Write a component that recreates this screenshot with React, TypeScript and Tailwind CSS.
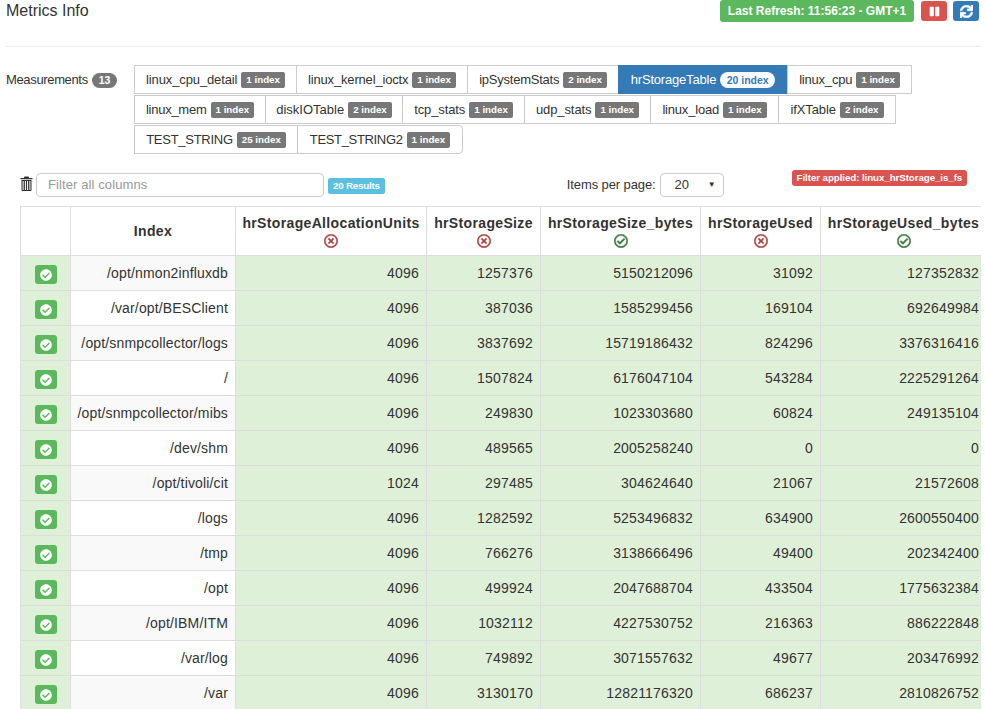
import { FaCheckCircle, FaPause, FaRegCheckCircle, FaRegTimesCircle, FaSync } from "react-icons/fa";

type P = { n: string; c: string; w: string; t: string };

const row1: P[] = [
  { n: "linux_cpu_detail", c: "1 index", w: "w-[163px]", t: "tracking-[-0.12px]" },
  { n: "linux_kernel_ioctx", c: "1 index", w: "w-[172px]", t: "tracking-[-0.17px]" },
  { n: "ipSystemStats", c: "2 index", w: "w-[152px]", t: "tracking-[-0.23px]" },
  { n: "hrStorageTable", c: "20 index", w: "w-[170px]", t: "tracking-[-0.2px]" },
  { n: "linux_cpu", c: "1 index", w: "w-[125px]", t: "tracking-[-0.2px]" },
];
const row2: P[] = [
  { n: "linux_mem", c: "1 index", w: "w-[132px]", t: "tracking-[-0.25px]" },
  { n: "diskIOTable", c: "2 index", w: "w-[138px]", t: "tracking-normal" },
  { n: "tcp_stats", c: "1 index", w: "w-[123px]", t: "tracking-[-0.1px]" },
  { n: "udp_stats", c: "1 index", w: "w-[127px]", t: "tracking-[-0.1px]" },
  { n: "linux_load", c: "1 index", w: "w-[129px]", t: "tracking-[-0.2px]" },
  { n: "ifXTable", c: "2 index", w: "w-[118px]", t: "tracking-[-0.1px]" },
];
const row3: P[] = [
  { n: "TEST_STRING", c: "25 index", w: "w-[164px]", t: "tracking-[-0.27px]" },
  { n: "TEST_STRING2", c: "1 index", w: "w-[166px]", t: "tracking-[-0.33px]" },
];

const cols: [string, boolean, string][] = [
  ["hrStorageAllocationUnits", false, "w-[191px]"],
  ["hrStorageSize", false, "w-[114px]"],
  ["hrStorageSize_bytes", true, "w-[160px]"],
  ["hrStorageUsed", false, "w-[120px]"],
  ["hrStorageUsed_bytes", true, "w-[166px]"],
];

const rows: (string | number)[][] = [
  ["/opt/nmon2influxdb", 4096, 1257376, 5150212096, 31092, 127352832],
  ["/var/opt/BESClient", 4096, 387036, 1585299456, 169104, 692649984],
  ["/opt/snmpcollector/logs", 4096, 3837692, 15719186432, 824296, 3376316416],
  ["/", 4096, 1507824, 6176047104, 543284, 2225291264],
  ["/opt/snmpcollector/mibs", 4096, 249830, 1023303680, 60824, 249135104],
  ["/dev/shm", 4096, 489565, 2005258240, 0, 0],
  ["/opt/tivoli/cit", 1024, 297485, 304624640, 21067, 21572608],
  ["/logs", 4096, 1282592, 5253496832, 634900, 2600550400],
  ["/tmp", 4096, 766276, 3138666496, 49400, 202342400],
  ["/opt", 4096, 499924, 2047688704, 433504, 1775632384],
  ["/opt/IBM/ITM", 4096, 1032112, 4227530752, 216363, 886222848],
  ["/var/log", 4096, 749892, 3071557632, 49677, 203476992],
  ["/var", 4096, 3130170, 12821176320, 686237, 2810826752],
];

function Pill({ p, last }: { p: P; last?: boolean }) {
  const active = p.n === "hrStorageTable";
  return (
    <div className={`-ml-px flex h-[29px] items-center justify-center gap-[4px] border ${p.w} ${active ? "border-[#337ab7] bg-[#337ab7] text-white" : "border-[#ccc] bg-white text-[#333]"} ${last ? "rounded-r-[4px]" : ""}`}>
      <span className={p.t}>{p.n}</span>
      {active ? (
        <span className="rounded-[10px] bg-white px-[6.5px] py-[1px] text-[10.5px] leading-[14px] font-bold text-[#337ab7]">{p.c}</span>
      ) : (
        <span className="rounded-[2px] bg-[#777] px-[5px] pt-[2px] pb-[3px] text-[9.75px] leading-[11px] font-bold text-white">{p.c}</span>
      )}
    </div>
  );
}

function Trash() {
  return (
    <svg width="13" height="15" viewBox="0 0 13 15" className="mt-[3px] shrink-0" fill="#333">
      <path d="M4.5 0.5h4l0.7 1.5H12.5v1.2H0.5V2h3.3z" />
      <path d="M1.5 4h10v10.2a0.8 0.8 0 0 1-0.8 0.8H2.3a0.8 0.8 0 0 1-0.8-0.8zM2.6 5v9h1V5zM4.9 5v9h1V5zM7.1 5v9h1V5zM9.4 5v9h1V5z" fillRule="evenodd" />
    </svg>
  );
}

export default function App() {
  return (
    <div className="h-[709px] w-[985px] overflow-hidden bg-white text-[13px] text-[#333]" style={{ fontFamily: '"Liberation Sans", Arial, sans-serif' }}>
      <div className="mr-[4px] ml-[6px] flex h-[47px] items-start justify-between border-b border-[#eee] pr-[2px]">
        <h1 className="mt-[2px] text-[16px] leading-[18px] text-[#333]">Metrics Info</h1>
        <div className="flex items-start">
          <span className="flex h-[22px] w-[194px] items-center justify-center rounded-[3px] bg-[#5cb85c] text-[12px] font-bold text-white">Last Refresh: 11:56:23 - GMT+1</span>
          <span className="mt-[1px] ml-[7px] flex h-[20px] w-[26px] items-center justify-center rounded-[3px] bg-[#d9534f] text-white"><FaPause size={11} /></span>
          <span className="mt-[1px] ml-[6px] flex h-[20px] w-[26px] items-center justify-center rounded-[3px] bg-[#337ab7] text-white"><FaSync size={13} stroke="currentColor" strokeWidth={24} /></span>
        </div>
      </div>

      <div className="mt-[18px] ml-[6px] flex">
        <div className="flex w-[129px] items-start pt-[7px]">
          <span className="text-[13px] leading-[16px] tracking-[-0.35px]">Measurements</span>
          <span className="mt-[1px] ml-[4px] rounded-[10px] bg-[#777] px-[7px] py-[1px] text-[10.5px] leading-[13px] font-bold text-white">13</span>
        </div>
        <div className="flex flex-col gap-[1px] text-[13px]">
          <div className="flex">{row1.map((p) => <Pill key={p.n} p={p} />)}</div>
          <div className="flex">{row2.map((p) => <Pill key={p.n} p={p} />)}</div>
          <div className="flex">{row3.map((p, i) => <Pill key={p.n} p={p} last={i === 1} />)}</div>
        </div>
      </div>

      <div className="mt-[19px] ml-[20px] flex h-[33px] items-start">
        <Trash />
        <div className="ml-[3px] flex h-[24px] w-[288px] items-center rounded-[4px] border border-[#ccc] px-[11px] text-[13px] tracking-[0.1px] text-[#999]">Filter all columns</div>
        <span className="mt-[5px] ml-[4px] rounded-[2px] bg-[#5bc0de] px-[5px] pt-[2px] pb-[3px] text-[9.75px] leading-[11px] font-bold tracking-[-0.2px] text-white">20 Results</span>
        <span className="mt-[4px] ml-[182px] text-[13px] leading-[16px] tracking-[-0.1px]">Items per page:</span>
        <div className="ml-[4px] flex h-[24px] w-[64px] items-center justify-between rounded-[4px] border border-[#ccc] pr-[7px] pl-[14px] text-[13px]">
          <span>20</span>
          <span className="text-[8px]">▼</span>
        </div>
        <span className="mt-[-3px] ml-[68px] rounded-[3px] bg-[#d9534f] px-[5px] pt-[2px] pb-[3px] text-[9.75px] leading-[11px] font-bold tracking-[-0.08px] text-white">Filter applied: linux_hrStorage_is_fs</span>
      </div>

      <div className="ml-[20px] w-[961px] overflow-hidden">
        <table className="w-[966px] table-fixed border-collapse text-[14px]">
          <thead>
            <tr className="h-[49px]">
              <th className="w-[50px] border border-[#ddd]"></th>
              <th className="w-[165px] border border-[#ddd] text-[14px] font-bold tracking-[0.35px]">Index</th>
              {cols.map(([name, ok, w]) => (
                <th key={name} className={`${w} border border-[#ddd] text-[14px] leading-[17px] font-bold tracking-[0.35px]`}>
                  <div>{name}</div>
                  <div className="flex justify-center pt-[2px]">
                    {ok ? <FaRegCheckCircle size={14} stroke="currentColor" strokeWidth={16} className="text-[#3c763d]" /> : <FaRegTimesCircle size={14} stroke="currentColor" strokeWidth={16} className="text-[#a94442]" />}
                  </div>
                </th>
              ))}
            </tr>
          </thead>
          <tbody>
            {rows.map((r, i) => (
              <tr key={i} className="h-[35px]">
                <td className="border border-[#ddd] bg-[#dff0d8] text-center">
                  <span className="relative top-[1px] inline-flex h-[19px] w-[22px] items-center justify-center rounded-[3px] bg-[#5cb85c] align-middle text-white"><FaCheckCircle size={12} /></span>
                </td>
                <td className={`border border-[#ddd] pr-[7px] text-right tracking-[0.15px] ${i % 2 === 0 ? "bg-[#f9f9f9]" : "bg-white"}`}>{r[0]}</td>
                {r.slice(1).map((v, j) => (
                  <td key={j} className="border border-[#ddd] bg-[#dff0d8] pr-[7px] text-right tracking-[0.2px]">{v}</td>
                ))}
              </tr>
            ))}
          </tbody>
        </table>
      </div>
    </div>
  );
}
